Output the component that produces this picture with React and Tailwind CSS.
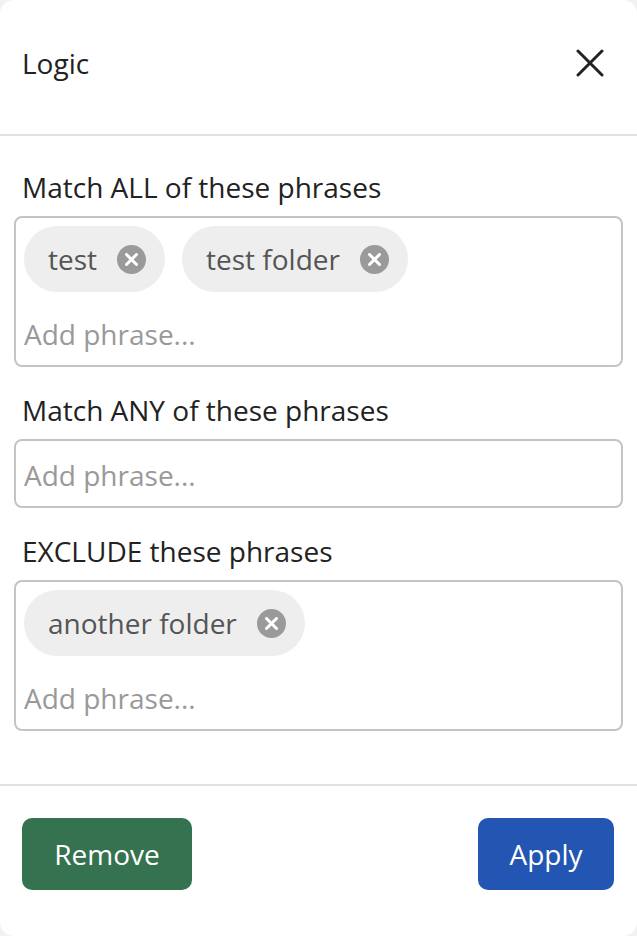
import React from 'react';

const Chip = ({ label }) => (
    <div className="flex items-center h-[66px] rounded-full bg-[#eeeeee] pl-[24px] pr-[19px] gap-[20px]">
        <span className="text-[28px] text-[#555555] leading-none">{label}</span>
        <span className="w-[29px] h-[29px] rounded-full bg-[#9a9a9a] flex items-center justify-center">
            <svg width="13" height="13" viewBox="0 0 13 13" fill="none">
                <path d="M1.5 1.5 L11.5 11.5 M11.5 1.5 L1.5 11.5" stroke="white" strokeWidth="3" strokeLinecap="round" />
            </svg>
        </span>
    </div>
);

const PhraseBox = ({ chips = [] }) => (
    <div className="mx-[14px] border-2 border-[#c4c4c4] rounded-[8px] px-[8px] pb-[1px] pt-[4px]">
        {chips.length > 0 && (
            <div className="flex flex-wrap gap-[17px] pt-[4px] mb-[12px]">
                {chips.map(c => <Chip key={c} label={c} />)}
            </div>
        )}
        <div className="h-[60px] flex items-center text-[28px] text-[#999999]">Add phrase...</div>
    </div>
);

const Section = ({ title, chips }) => (
    <div>
        <div className="px-[22px] h-[40px] flex items-center text-[28px] text-[#222222] mb-[9px]">{title}</div>
        <PhraseBox chips={chips} />
    </div>
);

export default function App() {
    return (
        <div className="w-[637px] h-[936px] bg-[#f2f2f2]" style={{ fontFamily: '"Open Sans", "Noto Sans", sans-serif' }}>
            <div className="w-full h-full bg-white rounded-[14px] flex flex-col overflow-hidden">
                {/* Header */}
                <div className="h-[136px] flex items-center justify-between pl-[22px] pr-[33px] pb-[8px] border-b-2 border-[#e2e2e2]">
                    <span className="text-[28px] text-[#222222]">Logic</span>
                    <svg width="28" height="28" viewBox="0 0 28 28" fill="none">
                        <path d="M2 2 L26 26 M26 2 L2 26" stroke="#222222" strokeWidth="3" strokeLinecap="round" />
                    </svg>
                </div>

                {/* Body */}
                <div className="flex flex-col gap-[23px] pt-[31px] h-[650px] border-b-2 border-[#e2e2e2]">
                    <Section title="Match ALL of these phrases" chips={['test', 'test folder']} />
                    <Section title="Match ANY of these phrases" />
                    <Section title="EXCLUDE these phrases" chips={['another folder']} />
                </div>

                {/* Footer */}
                <div className="flex items-start justify-between pl-[22px] pr-[23px] pt-[32px]">
                    <button className="w-[170px] h-[72px] rounded-[10px] bg-[#357250] text-white text-[28px]">Remove</button>
                    <button className="w-[136px] h-[72px] rounded-[10px] bg-[#2355b2] text-white text-[28px]">Apply</button>
                </div>
            </div>
        </div>
    );
}
